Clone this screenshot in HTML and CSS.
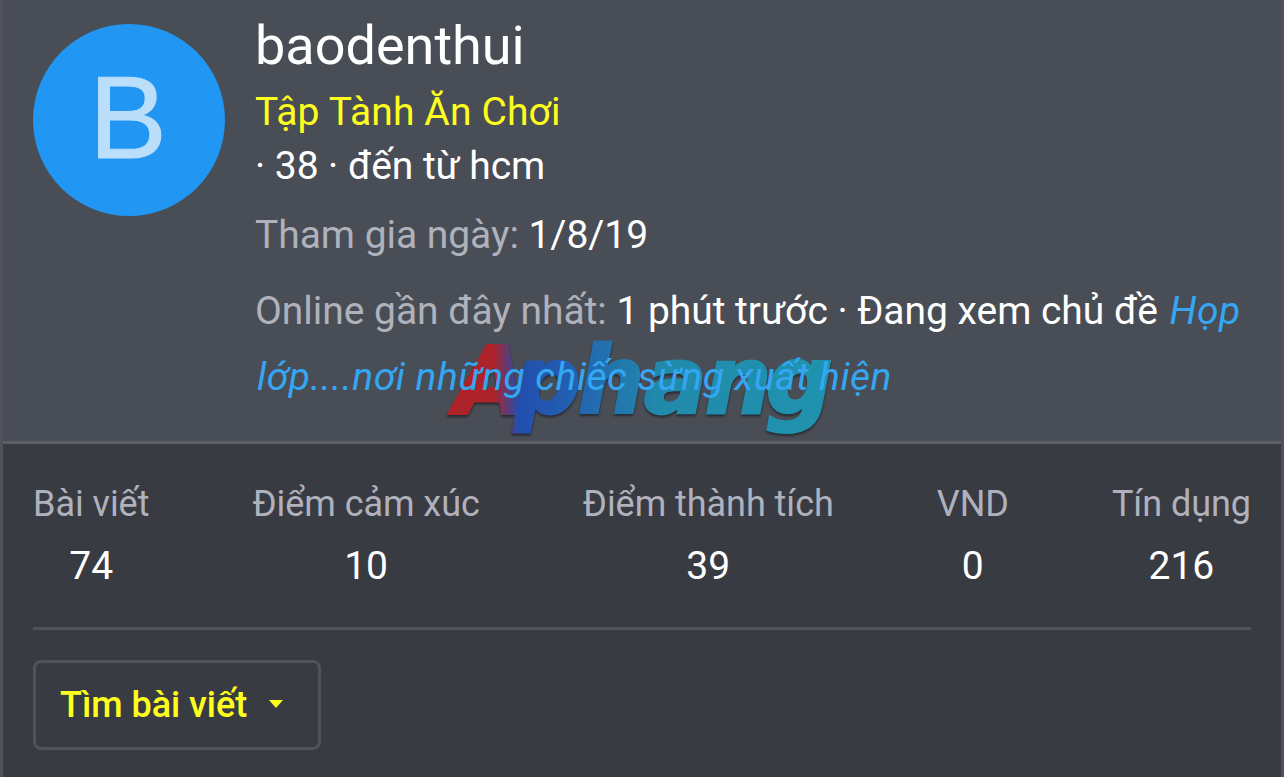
FILE: index.html
```html
<!DOCTYPE html>
<html lang="vi">
<head>
<meta charset="utf-8">
<title>baodenthui</title>
<link rel="stylesheet" href="styles.css">
</head>
<body>
<main class="card">
  <header class="head">
    <svg class="watermark" viewBox="0 0 410 110" width="410" height="110">
      <defs>
        <linearGradient id="brand" gradientUnits="userSpaceOnUse" x1="8" y1="0" x2="390" y2="0">
          <stop offset="0" stop-color="#b81f25"/>
          <stop offset=".12" stop-color="#b81f25"/>
          <stop offset=".185" stop-color="#1f4fb8"/>
          <stop offset=".3" stop-color="#1f5fbb"/>
          <stop offset=".55" stop-color="#1d91b5"/>
          <stop offset="1" stop-color="#1b9bb8"/>
        </linearGradient>
      </defs>
      <text class="brand-text" y="78"><tspan x="15">A</tspan><tspan x="74">p</tspan><tspan x="138">h</tspan><tspan x="204">a</tspan><tspan x="265">n</tspan><tspan x="326">g</tspan></text>
    </svg>
    <div class="avatar"><span class="avatar-letter">B</span></div>
    <div class="info">
      <h1 class="name">baodenthui</h1>
      <div class="title">Tập Tành Ăn Chơi</div>
      <div class="from">· 38 · đến từ hcm</div>
      <div class="row joined"><span class="muted">Tham gia ngày:</span> 1/8/19</div>
      <div class="row seen"><span class="muted">Online gần đây nhất:</span> 1 phút trước · Đang xem chủ đề <a class="topic">Họp</a><br><a class="topic">lớp....nơi những chiếc sừng xuất hiện</a></div>
    </div>
  </header>
  <section class="body">
    <div class="stats">
      <dl class="stat"><dt>Bài viết</dt><dd>74</dd></dl>
      <dl class="stat"><dt>Điểm cảm xúc</dt><dd>10</dd></dl>
      <dl class="stat"><dt>Điểm thành tích</dt><dd>39</dd></dl>
      <dl class="stat"><dt>VND</dt><dd>0</dd></dl>
      <dl class="stat"><dt>Tín dụng</dt><dd>216</dd></dl>
    </div>
    <button class="find">Tìm bài viết
      <svg class="caret" width="14" height="8" viewBox="0 0 14 8"><path d="M0 0H14L7 8Z"/></svg>
    </button>
  </section>
</main>
</body>
</html>
```
FILE: styles.css
```css
* { box-sizing: border-box; }
body { margin: 0; background: #393b43; color: #fff; font-family: Roboto, sans-serif; }
.card { width: 1284px; height: 777px; overflow: hidden; display: flex; flex-direction: column; border-left: 3px solid #50535b; border-right: 3px solid #50535b; }
.head { position: relative; height: 444px; flex: none; display: flex; gap: 30px; padding: 16px 0 0 30px; background: #494d55; border-bottom: 3px solid #5c5f68; }
.avatar { width: 192px; height: 192px; margin-top: 8px; flex: none; border-radius: 50%; background: #2196f3; color: #bbdefb; display: flex; align-items: center; justify-content: center; }
.avatar-letter { font-family: "Liberation Sans", Arial, sans-serif; font-size: 117px; line-height: 192px; margin: -4px 2px 0 0; -webkit-text-stroke: 1px #bbdefb; }
.info { position: relative; z-index: 1; flex: 1; font-size: 39px; white-space: nowrap; }
.name { margin: 0; font-size: 54px; font-weight: 400; line-height: 60px; }
.title, .from { line-height: 54px; }
.title { margin-top: 9px; color: #ffff1e; letter-spacing: .13px; }
.from { letter-spacing: -.05px; }
.row { line-height: 66px; }
.joined { margin-top: 9px; letter-spacing: -.04px; }
.seen { margin-top: 10px; letter-spacing: -.03px; }
.muted { color: #afb2bc; }
.topic { margin-left: 2px; color: #34a6f2; font-style: italic; letter-spacing: .48px; }
.watermark { position: absolute; left: 437px; top: 335px; }
.brand-text { font: italic bold 93px "DejaVu Sans", sans-serif; fill: url(#brand); stroke: url(#brand); stroke-width: 3px; opacity: .9; filter: drop-shadow(0 2px 1px rgba(20, 22, 28, .7)); }
.body { flex: 1; padding: 33px 30px 0; }
.stats { display: flex; justify-content: space-between; height: 153px; border-bottom: 3px solid #50535b; }
.stat { margin: 0; text-align: center; }
.stat dt { font-size: 36px; line-height: 54px; color: #afb2bc; letter-spacing: -.05px; }
.stat dd { margin: 8px 0 0; font-size: 39px; line-height: 54px; }
.find { width: 288px; height: 90px; margin-top: 30px; padding: 0 0 0 24px; display: flex; align-items: center; gap: 22px; border: 3px solid #50535b; border-radius: 8px; background: none; color: #ffff1e; font: 500 36px Roboto, sans-serif; letter-spacing: -.05px; }
.caret { fill: #ffff1e; margin-bottom: 2px; }
```
